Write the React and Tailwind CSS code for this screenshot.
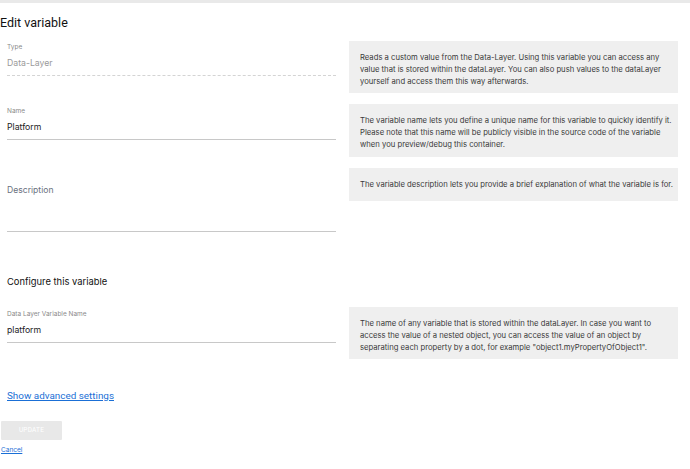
import React from "react";

const sf = { fontFamily: "Inter, 'Liberation Sans', sans-serif" };

function Field({ label, value, valueClass = "text-[#222]", dashed = false, pt = "pt-[2px]" }) {
  return (
    <div className={`${pt} ml-[7px]`}>
      <div className="text-[6.5px] leading-[8px] text-[#8a8a8a]">{label}</div>
      <div
        className={`mt-[6px] text-[8.7px] leading-[12px] pb-[6px] ${valueClass} ${
          dashed ? "border-b border-dashed border-[#d4d4d4]" : "border-b border-[#c8c8c8]"
        }`}
      >
        {value}
      </div>
    </div>
  );
}

function Box({ children, h }) {
  return (
    <div className={`bg-[#efefef] text-[#3a3a3a] text-[7.68px] leading-[12px] pl-[11px] pr-[2px] pt-[11px] ${h}`}>
      {children}
    </div>
  );
}

export default function App() {
  return (
    <div className="w-[690px] h-[469px] bg-white overflow-hidden" style={sf}>
      <div className="h-[3px] bg-[#e9e9e9]" />
      <div className="mt-[12px] text-[12.5px] leading-[16px] text-[#111]" style={{ fontFamily: "Roboto, sans-serif" }}>
        Edit variable
      </div>

      <div className="mt-[10px] grid grid-cols-[336px_329px] gap-[13px] items-start">
        <Field label="Type" value="Data-Layer" valueClass="text-[#9a9a9a]" dashed />
        <Box h="h-[52px]">
          Reads a custom value from the Data-Layer. Using this variable you can access any value that is stored within the dataLayer. You can also push values to the dataLayer yourself and access them this way afterwards.
        </Box>
      </div>

      <div className="mt-[11px] grid grid-cols-[336px_329px] gap-[13px] items-start">
        <Field label="Name" value="Platform" pt="pt-[3px]" />
        <Box h="h-[53px]">
          The variable name lets you define a unique name for this variable to quickly identify it. Please note that this name will be publicly visible in the source code of the variable when you preview/debug this container.
        </Box>
      </div>

      <div className="mt-[11px] grid grid-cols-[336px_329px] gap-[13px] items-start">
        <div className="ml-[7px] pt-[16px] h-[64px] border-b border-[#c8c8c8] text-[8.6px] leading-[12px] text-[#6b7280]">
          Description
        </div>
        <Box h="h-[33px]">
          The variable description lets you provide a brief explanation of what the variable is for.
        </Box>
      </div>

      <div className="mt-[43px] ml-[7px] text-[9.4px] leading-[14px] text-[#111]">Configure this variable</div>

      <div className="mt-[18px] grid grid-cols-[336px_329px] gap-[13px] items-start">
        <Field label="Data Layer Variable Name" value="platform" pt="pt-[3px]" />
        <Box h="h-[52px]">
          The name of any variable that is stored within the dataLayer. In case you want to access the value of a nested object, you can access the value of an object by separating each property by a dot, for example "object1.myPropertyOfObject1".
        </Box>
      </div>

      <div className="mt-[30px] ml-[7px] text-[9.9px] leading-[14px]" style={{ fontFamily: "Roboto, sans-serif" }}>
        <a className="text-[#1a6fd6] underline">Show advanced settings</a>
      </div>

      <button
        className="mt-[18px] ml-[1px] block w-[61px] h-[19px] bg-[#e8e8e8] rounded-[1px] text-white text-[6.5px] tracking-[0.2px]"
        style={{ fontFamily: "Roboto, sans-serif" }}
      >
        UPDATE
      </button>
      <div className="mt-[6px] ml-[1px] text-[6.5px] leading-[9px]">
        <a className="text-[#1a6fd6] underline">Cancel</a>
      </div>
    </div>
  );
}
